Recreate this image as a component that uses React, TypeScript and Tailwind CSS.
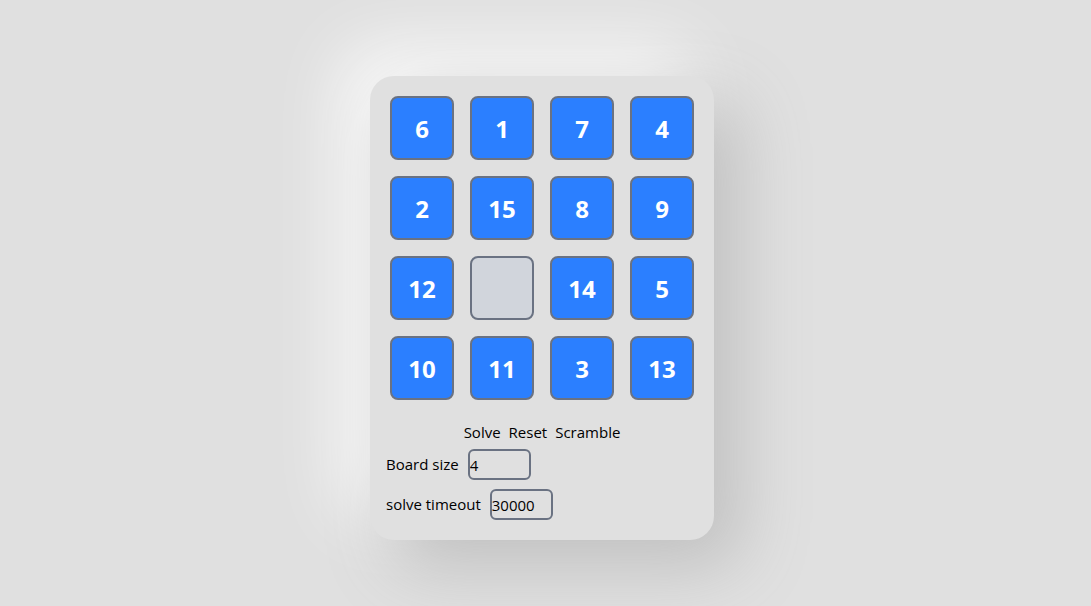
import React from "react";

const tiles = [6, 1, 7, 4, 2, 15, 8, 9, 12, 0, 14, 5, 10, 11, 3, 13];

export default function App() {
  return (
    <div
      className="min-h-screen w-full bg-[#e0e0e0] flex justify-center items-start pt-[76px] pr-[7px]"
      style={{ fontFamily: '"Open Sans", "Noto Sans", sans-serif' }}
    >
      <div className="w-[344px] h-[464px] rounded-[24px] bg-[#e0e0e0] shadow-[25px_25px_70px_#bebebe,-25px_-25px_70px_#ffffff] px-4 pt-5">
        <div className="grid grid-cols-4 gap-4 px-1">
          {tiles.map((t, i) =>
            t === 0 ? (
              <div
                key={i}
                className="w-16 h-16 rounded-lg border-2 border-gray-500 bg-gray-300"
              />
            ) : (
              <div
                key={i}
                className="w-16 h-16 rounded-lg border-2 border-gray-500 bg-blue-500 flex items-center justify-center pt-[2px] text-white font-bold text-[24px]"
              >
                {t}
              </div>
            )
          )}
        </div>
        <div className="flex justify-center gap-2 mt-5 h-6 items-center text-[15px] text-black">
          <button>Solve</button>
          <button>Reset</button>
          <button>Scramble</button>
        </div>
        <div className="flex items-center gap-[9px] mt-[5px] text-[15px] text-black">
          <span>Board size</span>
          <input
            defaultValue="4"
            className="w-[63px] h-[31px] border-2 border-gray-500 rounded-md text-[15px] outline-none"
          />
        </div>
        <div className="flex items-center gap-[9px] mt-[9px] text-[15px] text-black">
          <span>solve timeout</span>
          <input
            defaultValue="30000"
            className="w-[63px] h-[31px] border-2 border-gray-500 rounded-md text-[15px] outline-none"
          />
        </div>
      </div>
    </div>
  );
}
